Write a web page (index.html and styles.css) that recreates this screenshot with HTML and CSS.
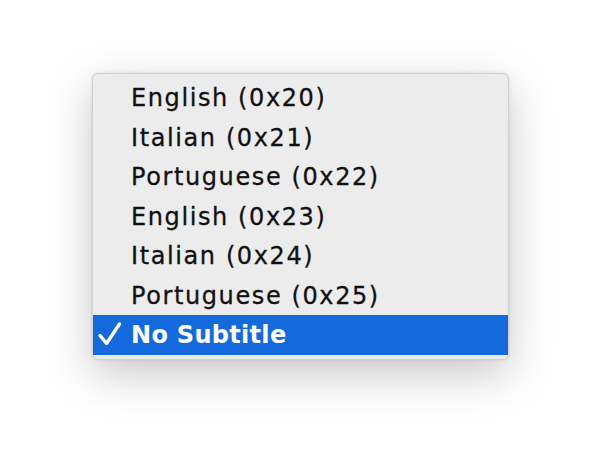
FILE: index.html
```html
<!DOCTYPE html>
<html>
<head>
<meta charset="utf-8">
<link rel="stylesheet" href="styles.css">
</head>
<body>
<div class="menu">
  <div class="item">English (0x20)</div>
  <div class="item">Italian (0x21)</div>
  <div class="item">Portuguese (0x22)</div>
  <div class="item">English (0x23)</div>
  <div class="item">Italian (0x24)</div>
  <div class="item">Portuguese (0x25)</div>
  <div class="item selected"><svg class="check" width="26" height="26" viewBox="0 0 26 26"><path d="M3 14.5 L9.5 22.5 L22.5 3" fill="none" stroke="#ffffff" stroke-width="3.4" stroke-linecap="round" stroke-linejoin="round"/></svg>No Subtitle</div>
</div>
</body>
</html>
```
FILE: styles.css
```css
html, body {
  margin: 0;
  padding: 0;
  background: #ffffff;
}
body {
  width: 600px;
  height: 469px;
  overflow: hidden;
  padding-top: 73px;
  box-sizing: border-box;
}
.menu {
  margin-left: 92px;
  width: 417px;
  box-sizing: border-box;
  background: #ececec;
  border: 1px solid #d2d2d2;
  border-radius: 6px;
  padding: 4px 0 4px;
  box-shadow: 0 14px 45px rgba(0, 0, 0, 0.22), 0 0 3px rgba(0, 0, 0, 0.12);
  font-family: "DejaVu Sans", Verdana, sans-serif;
  font-size: 24px;
  letter-spacing: 1.6px;
  color: #111111;
  -webkit-text-stroke: 0.3px #111111;
}
.item {
  height: 39.5px;
  line-height: 40px;
  padding-left: 38px;
  position: relative;
  white-space: nowrap;
}
.item.selected {
  background: #1469dc;
  color: #ffffff;
  -webkit-text-stroke: 0;
  font-weight: bold;
  letter-spacing: 0.3px;
}
.check {
  position: absolute;
  left: 4px;
  top: 6px;
}
```
